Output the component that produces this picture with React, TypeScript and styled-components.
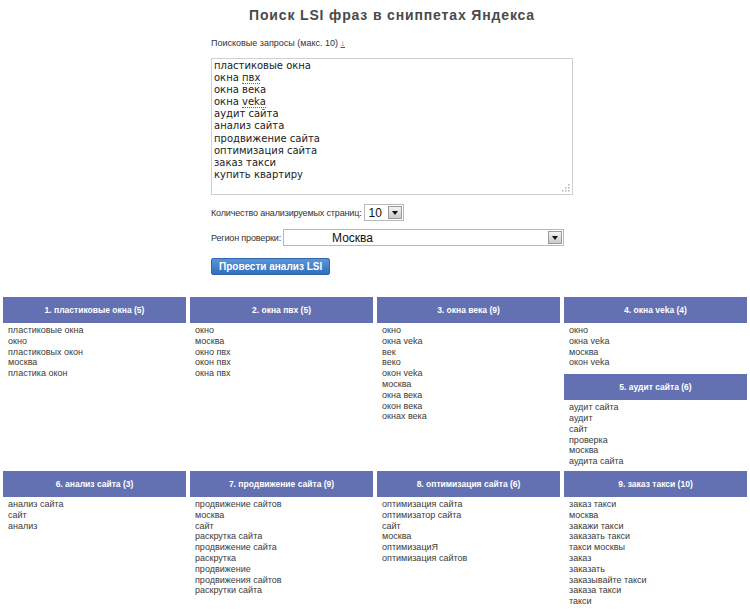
import React from "react";
import styled, { createGlobalStyle } from "styled-components";

type Group = { title: string; items: string[] };

const QUERIES: { text: string; typo?: boolean; prefix?: string }[] = [
  { text: "пластиковые окна" },
  { prefix: "окна ", text: "пвх", typo: true },
  { text: "окна века" },
  { prefix: "окна ", text: "veka", typo: true },
  { text: "аудит сайта" },
  { text: "анализ сайта" },
  { text: "продвижение сайта" },
  { text: "оптимизация сайта" },
  { text: "заказ такси" },
  { text: "купить квартиру" },
];

const G: Record<string, Group> = {
  g1: { title: "1. пластиковые окна (5)", items: ["пластиковые окна", "окно", "пластиковых окон", "москва", "пластика окон"] },
  g2: { title: "2. окна пвх (5)", items: ["окно", "москва", "окно пвх", "окон пвх", "окна пвх"] },
  g3: {
    title: "3. окна века (9)",
    items: ["окно", "окна veka", "век", "веко", "окон veka", "москва", "окна века", "окон века", "окнах века"],
  },
  g4: { title: "4. окна veka (4)", items: ["окно", "окна veka", "москва", "окон veka"] },
  g5: { title: "5. аудит сайта (6)", items: ["аудит сайта", "аудит", "сайт", "проверка", "москва", "аудита сайта"] },
  g6: { title: "6. анализ сайта (3)", items: ["анализ сайта", "сайт", "анализ"] },
  g7: {
    title: "7. продвижение сайта (9)",
    items: [
      "продвижение сайтов",
      "москва",
      "сайт",
      "раскрутка сайта",
      "продвижение сайта",
      "раскрутка",
      "продвижение",
      "продвижения сайтов",
      "раскрутки сайта",
    ],
  },
  g8: {
    title: "8. оптимизация сайта (6)",
    items: ["оптимизация сайта", "оптимизатор сайта", "сайт", "москва", "оптимизациЯ", "оптимизация сайтов"],
  },
  g9: {
    title: "9. заказ такси (10)",
    items: [
      "заказ такси",
      "москва",
      "закажи такси",
      "заказать такси",
      "такси москвы",
      "заказ",
      "заказать",
      "заказывайте такси",
      "заказа такси",
      "такси",
    ],
  },
};

const Block: React.FC<{ group: Group }> = ({ group }) => (
  <Card>
    <CardHead>{group.title}</CardHead>
    <CardList>
      {group.items.map((it, i) => (
        <li key={i}>{it}</li>
      ))}
    </CardList>
  </Card>
);

const App: React.FC = () => {
  return (
    <>
      <GlobalStyle />
      <Page>
        <Form>
          <Title>Поиск LSI фраз в сниппетах Яндекса</Title>
          <Label>
            Поисковые запросы (макс. 10) <Arrow>↓</Arrow>
          </Label>
          <Area role="textbox" aria-multiline="true">
            {QUERIES.map((q, i) => (
              <div key={i}>
                {q.prefix}
                {q.typo ? <Typo>{q.text}</Typo> : q.text}
              </div>
            ))}
            <Grip width="8" height="8" viewBox="0 0 8 8">
              <g fill="#b5b5b5">
                <rect x="6" y="0" width="1.5" height="1.5" />
                <rect x="3" y="3" width="1.5" height="1.5" />
                <rect x="6" y="3" width="1.5" height="1.5" />
                <rect x="0" y="6" width="1.5" height="1.5" />
                <rect x="3" y="6" width="1.5" height="1.5" />
                <rect x="6" y="6" width="1.5" height="1.5" />
              </g>
            </Grip>
          </Area>

          <Row>
            <RowLabel>Количество анализируемых страниц:</RowLabel>
            <Select $width={40}>
              <SelectText>10</SelectText>
              <SelectBtn />
            </Select>
          </Row>

          <Row $top={8}>
            <RowLabel>Регион проверки:</RowLabel>
            <Select $width={281}>
              <SelectText $indent={48}>Москва</SelectText>
              <SelectBtn />
            </Select>
          </Row>

          <SubmitButton type="button">Провести анализ LSI</SubmitButton>
        </Form>

        <Results>
          <Block group={G.g1} />
          <Block group={G.g2} />
          <Block group={G.g3} />
          <Stack>
            <Block group={G.g4} />
            <Block group={G.g5} />
          </Stack>
          <Block group={G.g6} />
          <Block group={G.g7} />
          <Block group={G.g8} />
          <Block group={G.g9} />
        </Results>
      </Page>
    </>
  );
};

export default App;

/* ---------- styles ---------- */

const GlobalStyle = createGlobalStyle`
  html, body {
    margin: 0;
    background: #fff;
  }
  body {
    font-family: "Liberation Sans", Arial, sans-serif;
    color: #333;
  }
`;

const Page = styled.div`
  padding: 7px 3px 0;
`;

const Form = styled.div`
  width: 362px;
  margin-left: 208px;
  display: flex;
  flex-direction: column;
  align-items: flex-start;
`;

const Title = styled.h1`
  align-self: stretch;
  margin: 0;
  text-align: center;
  font-size: 14px;
  line-height: 17px;
  font-weight: bold;
  letter-spacing: 0.85px;
  color: #4a4a4a;
`;

const Label = styled.div`
  margin-top: 14px;
  font-size: 9px;
  line-height: 11px;
  color: #333;
`;

const Arrow = styled.span`
  text-decoration: underline;
  color: #555;
`;

const Area = styled.div`
  position: relative;
  box-sizing: border-box;
  align-self: stretch;
  height: 137px;
  margin-top: 9px;
  padding: 1px 2px;
  border: 1px solid #d0d0d0;
  font-family: "DejaVu Sans", Verdana, sans-serif;
  font-size: 10px;
  line-height: 12.1px;
  color: #222;
`;

const Typo = styled.span`
  padding-bottom: 0px;
  border-bottom: 1px dotted #e03030;
`;

const Grip = styled.svg`
  position: absolute;
  right: 2px;
  bottom: 2px;
`;

const Row = styled.div<{ $top?: number }>`
  display: flex;
  align-items: center;
  margin-top: ${(p) => p.$top ?? 9}px;
  height: 17px;
`;

const RowLabel = styled.span`
  font-size: 9px;
  letter-spacing: -0.15px;
  color: #333;
  margin-right: 2px;
`;

const Select = styled.div<{ $width: number }>`
  box-sizing: border-box;
  width: ${(p) => p.$width}px;
  height: 17px;
  display: flex;
  align-items: center;
  justify-content: space-between;
  border: 1px solid #b8b8b8;
  background: #fff;
  padding: 0 1px 0 0;
`;

const SelectText = styled.span<{ $indent?: number }>`
  font-size: 12px;
  color: #111;
  padding-left: ${(p) => p.$indent ?? 4}px;
`;

const SelectBtn = styled.span`
  position: relative;
  box-sizing: border-box;
  width: 14px;
  height: 13px;
  border: 1px solid #9a9a9a;
  background: linear-gradient(#f4f4f4, #c9c9c9);
  &::after {
    content: "";
    position: absolute;
    left: 3px;
    top: 4px;
    border-left: 3.5px solid transparent;
    border-right: 3.5px solid transparent;
    border-top: 4px solid #111;
  }
`;

const SubmitButton = styled.button`
  margin-top: 12px;
  height: 17px;
  padding: 0 7px;
  border: 1px solid #2f66ad;
  border-radius: 2px;
  background: linear-gradient(#5b96d8, #2f6fbd);
  color: #fff;
  font-family: "Liberation Sans", Arial, sans-serif;
  font-size: 10px;
  font-weight: bold;
  line-height: 15px;
  cursor: pointer;
`;

const Results = styled.div`
  margin-top: 22px;
  display: grid;
  grid-template-columns: repeat(4, 1fr);
  column-gap: 4px;
  row-gap: 1px;
  align-items: start;
`;

const Stack = styled.div`
  display: flex;
  flex-direction: column;
  gap: 3px;
`;

const Card = styled.div``;

const CardHead = styled.div`
  height: 26px;
  display: flex;
  align-items: center;
  justify-content: center;
  background: #6371b2;
  color: #fff;
  font-size: 8.5px;
  font-weight: bold;
`;

const CardList = styled.ul`
  list-style: none;
  margin: 0;
  padding: 2px 5px 3px;
  font-size: 9px;
  line-height: 10.8px;
  color: #3a3a3a;
`;
